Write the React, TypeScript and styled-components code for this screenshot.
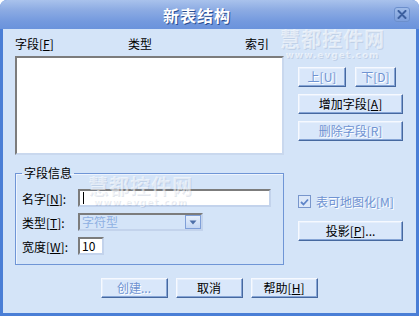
import React from "react";
import styled, {createGlobalStyle, css} from "styled-components";

const GlobalStyle = createGlobalStyle`
  html, body {
    margin: 0;
    padding: 0;
    background: #ffffff;
  }
  body {
    font-family: "Noto Sans CJK SC", "Liberation Sans", sans-serif;
    font-size: 12px;
    color: #000;
  }
`

const DISABLED = "#6f93d2";

const Window = styled.div`
  position: relative;
  width: 419px;
  height: 316px;
  display: flex;
  flex-direction: column;
  border-radius: 7px 7px 0 0;
  overflow: hidden;
  background: #4a7ed6;
`

const TitleBar = styled.div`
  height: 29px;
  flex-shrink: 0;
  display: flex;
  align-items: center;
  padding-right: 9px;
  background: linear-gradient(180deg, #a9c2ec 0%, #8cabe3 35%, #7399de 75%, #6a93dc 100%);
`

const Title = styled.div`
  flex: 1;
  text-align: center;
  color: #ffffff;
  font-size: 16px;
  font-weight: 700;
  letter-spacing: 1px;
  text-shadow: 1px 1px 0 #2b4f92;
`

const CloseButton = styled.div`
  width: 16px;
  height: 15px;
  border-radius: 3px;
  border: 1px solid #6c8fcc;
  background: linear-gradient(180deg, #9fbbe8, #7d9fdc);
  display: flex;
  align-items: center;
  justify-content: center;
  box-sizing: border-box;
`

const Body = styled.div`
  flex: 1;
  margin: 0 3px 3px 3px;
  background: #d4e4f8;
  padding: 9px 13px 0 12px;
  display: flex;
  flex-direction: column;
`

const TopSection = styled.div`
  display: flex;
  gap: 14px;
`

const LeftCol = styled.div`
  width: 269px;
  display: flex;
  flex-direction: column;
`

const RightCol = styled.div`
  width: 106px;
  display: flex;
  flex-direction: column;
  padding-top: 29px;
`

const HeaderRow = styled.div`
  display: grid;
  grid-template-columns: 113px 117px auto;
  height: 12px;
  line-height: 12px;
  margin-bottom: 6px;
`

const ListBox = styled.div`
  height: 99px;
  box-sizing: border-box;
  background: #ffffff;
  border: 2px solid;
  border-color: #7c7c7c #c9d8ee #c9d8ee #7c7c7c;
`

const Group = styled.fieldset`
  margin: 11px 0 0 0;
  padding: 9px 12px 9px 6px;
  border: 1px solid #6f95d6;
  box-shadow: inset 1px 1px 0 #eef4fd;
  border-radius: 0;
  min-width: 0;
`

const Legend = styled.legend`
  padding: 0 2px;
  line-height: 14px;
`

const FieldRow = styled.div`
  display: flex;
  align-items: center;
  height: 18px;
  & + & {
    margin-top: 6px;
  }
`

const FieldLabel = styled.div`
  width: 56px;
  flex-shrink: 0;
`

const inset = css`
  box-sizing: border-box;
  border: 2px solid;
  border-color: #7c7c7c #c3d3ec #c3d3ec #7c7c7c;
`

const TextInput = styled.div<{$w: number}>`
  ${inset};
  width: ${p => p.$w}px;
  height: 18px;
  background: #ffffff;
  display: flex;
  align-items: center;
  padding-left: 2px;
  line-height: 14px;
`

const Caret = styled.span`
  width: 1px;
  height: 12px;
  background: #000;
  margin-left: 1px;
`

const Combo = styled.div`
  ${inset};
  width: 125px;
  height: 18px;
  background: #d4e4f8;
  display: flex;
  align-items: center;
  padding-left: 2px;
`

const ComboText = styled.span`
  flex: 1;
  color: #8fb0e2;
  line-height: 14px;
`

const DropButton = styled.div`
  width: 16px;
  height: 14px;
  box-sizing: border-box;
  border: 1px solid #7f9fd8;
  background: linear-gradient(180deg, #e6effc, #c3d6f3);
  display: flex;
  align-items: center;
  justify-content: center;
`

const Button = styled.div<{$w?: number; $disabled?: boolean}>`
  width: ${p => (p.$w ? `${p.$w}px` : "100%")};
  height: 20px;
  box-sizing: border-box;
  display: flex;
  align-items: center;
  justify-content: center;
  background: #d9e7fa;
  border: 1px solid;
  border-color: #f6f9ff #46689f #46689f #f6f9ff;
  box-shadow: inset -1px -1px 0 #86a5d6, inset 1px 1px 0 #e6effc;
  line-height: 14px;
  color: ${p => (p.$disabled ? DISABLED : "#000")};
  text-shadow: ${p => (p.$disabled ? "1px 1px 0 #ffffff" : "none")};
`

const ButtonPair = styled.div`
  display: flex;
  gap: 9px;
  margin-bottom: 7px;
`

const ButtonStack = styled.div`
  display: flex;
  flex-direction: column;
  gap: 7px;
`

const CheckRow = styled.div`
  display: flex;
  align-items: center;
  gap: 5px;
  margin-top: 54px;
  margin-bottom: 13px;
  height: 13px;
`

const CheckBox = styled.div`
  width: 13px;
  height: 13px;
  box-sizing: border-box;
  border: 1px solid #7896cc;
  background: #dce8f9;
  display: flex;
  align-items: center;
  justify-content: center;
`

const DisabledText = styled.span`
  color: ${DISABLED};
  text-shadow: 1px 1px 0 #ffffff;
  line-height: 14px;
`

const BottomRow = styled.div`
  display: flex;
  justify-content: center;
  gap: 8px;
  margin-top: 13px;
`

const Key = styled.span`
  text-decoration: underline;
`

const Watermark = styled.div<{$x: number; $y: number}>`
  position: absolute;
  left: ${p => p.$x}px;
  top: ${p => p.$y}px;
  pointer-events: none;
  display: flex;
  flex-direction: column;
  align-items: center;
  color: rgba(255, 255, 255, 0.55);
  text-shadow: 1px 1px 0 rgba(110, 130, 165, 0.2);
  font-weight: 700;
`

const MarkBig = styled.div`
  font-size: 20px;
  line-height: 22px;
  letter-spacing: 1px;
`

const MarkSmall = styled.div`
  font-family: "DejaVu Sans", sans-serif;
  font-size: 9px;
  line-height: 10px;
  letter-spacing: 1px;
`

export default function App() {
    return (
        <>
            <GlobalStyle/>
            <Window>
                <TitleBar>
                    <Title>新表结构</Title>
                    <CloseButton>
                        <svg width="10" height="9" viewBox="0 0 10 9">
                            <path d="M1.5 1 L8.5 8 M8.5 1 L1.5 8" stroke="#3c5f9e" strokeWidth="2" strokeLinecap="round"/>
                        </svg>
                    </CloseButton>
                </TitleBar>
                <Body>
                    <TopSection>
                        <LeftCol>
                            <HeaderRow>
                                <span>字段[<Key>F</Key>]</span>
                                <span>类型</span>
                                <span>索引</span>
                            </HeaderRow>
                            <ListBox/>
                            <Group>
                                <Legend>字段信息</Legend>
                                <FieldRow>
                                    <FieldLabel>名字[<Key>N</Key>]:</FieldLabel>
                                    <TextInput $w={194}><Caret/></TextInput>
                                </FieldRow>
                                <FieldRow>
                                    <FieldLabel>类型[<Key>T</Key>]:</FieldLabel>
                                    <Combo>
                                        <ComboText>字符型</ComboText>
                                        <DropButton>
                                            <svg width="8" height="5" viewBox="0 0 8 5">
                                                <path d="M0.5 0.5 L7.5 0.5 L4 4.5 Z" fill="#4d6fa8"/>
                                            </svg>
                                        </DropButton>
                                    </Combo>
                                </FieldRow>
                                <FieldRow>
                                    <FieldLabel>宽度[<Key>W</Key>]:</FieldLabel>
                                    <TextInput $w={26}>10</TextInput>
                                </FieldRow>
                            </Group>
                        </LeftCol>
                        <RightCol>
                            <ButtonPair>
                                <Button $w={48} $disabled>上[U]</Button>
                                <Button $w={41} $disabled>下[D]</Button>
                            </ButtonPair>
                            <ButtonStack>
                                <Button>增加字段[<Key>A</Key>]</Button>
                                <Button $disabled>删除字段[R]</Button>
                            </ButtonStack>
                            <CheckRow>
                                <CheckBox>
                                    <svg width="9" height="8" viewBox="0 0 9 8">
                                        <path d="M1 4 L3.5 6.5 L8 1.5" stroke="#5f85c8" strokeWidth="1.8" fill="none"/>
                                    </svg>
                                </CheckBox>
                                <DisabledText>表可地图化[M]</DisabledText>
                            </CheckRow>
                            <Button>投影[<Key>P</Key>]...</Button>
                        </RightCol>
                    </TopSection>
                    <BottomRow>
                        <Button $w={67} $disabled>创建...</Button>
                        <Button $w={67}>取消</Button>
                        <Button $w={67}>帮助[<Key>H</Key>]</Button>
                    </BottomRow>
                </Body>
                <Watermark $x={280} $y={28}>
                    <MarkBig>慧都控件网</MarkBig>
                    <MarkSmall>www.evget.com</MarkSmall>
                </Watermark>
                <Watermark $x={88} $y={175}>
                    <MarkBig>慧都控件网</MarkBig>
                    <MarkSmall>www.evget.com</MarkSmall>
                </Watermark>
            </Window>
        </>
    );
}
